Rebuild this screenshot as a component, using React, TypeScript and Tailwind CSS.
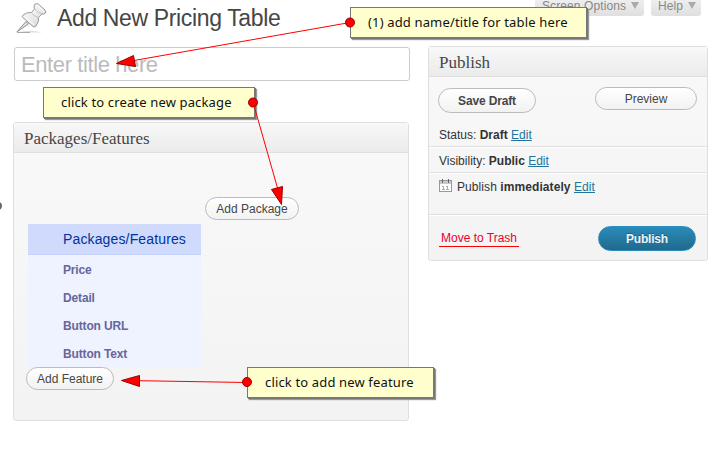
import type { ReactNode } from "react";

const pill =
  "box-border flex items-center justify-center rounded-full border border-[#bbb] bg-gradient-to-b from-white to-[#f2f2f2] text-[12px] leading-none text-[#464646] whitespace-nowrap";

function Panel({ title, className, children }: { title: string; className: string; children: ReactNode }) {
  return (
    <section className={`box-border flex flex-col rounded-[3px] border border-[#dfdfdf] bg-gradient-to-b from-[#f9f9f9] to-[#f3f3f3] ${className}`}>
      <h3 className="h-[30px] shrink-0 border-b border-[#dfdfdf] bg-gradient-to-b from-[#f8f8f8] to-[#ebebeb] pl-[10px] font-['Liberation_Serif',serif] text-[17px] leading-[31px] text-[#464646]">
        {title}
      </h3>
      {children}
    </section>
  );
}

function Callout({ className, children }: { className: string; children: ReactNode }) {
  return (
    <div className={`absolute box-border h-[31px] whitespace-nowrap border border-[#777] bg-[#ffffce] pl-[17px] font-['Noto_Sans',sans-serif] text-[13px] leading-[29px] tracking-[0.15px] text-[#111] shadow-[1px_1px_0_#777,2px_2px_1px_#999] ${className}`}>
      {children}
    </div>
  );
}

function Edit() {
  return <a className="text-[#21759b] underline">Edit</a>;
}

function Pin() {
  return (
    <svg className="block h-[32px] w-[32px]" viewBox="0 0 32 32">
      <defs>
        <linearGradient id="pin" x1="0" y1="0" x2="1" y2="1">
          <stop offset="0" stopColor="#ffffff" />
          <stop offset="0.5" stopColor="#ececec" />
          <stop offset="1" stopColor="#cfcfcf" />
        </linearGradient>
      </defs>
      <path d="M1 30.500Q14 27 26 30.500Z" fill="#ddd" />
      <path d="M1 30.500H14" stroke="#aaa" strokeWidth="1" />
      <path d="M10 19.500L1 29.800L12.500 22Z" fill="#ddd" stroke="#8a8a8a" strokeWidth="0.9" />
      <path d="M18.800 2.200Q20.500 0.900 22.500 2.200L29 8Q30.500 9.800 29.300 11.200Q28 12.500 26 12L22.500 15.500Q23.500 19.500 19.800 24.300Q18.500 25.500 17 24.500L6.800 15.500Q5.700 14.300 6.900 13.200Q10.500 10 15.500 10.500L18.500 7Q17.300 3.700 18.800 2.200Z" fill="url(#pin)" stroke="#909090" strokeWidth="0.9" />
      <path d="M18.500 6.800Q21.500 10.800 26 12M15.500 10.500Q17.500 14.500 22.500 15.500" fill="none" stroke="#bdbdbd" strokeWidth="0.8" />
      <path d="M19 8.500L16.800 11M20.500 3.500Q24.500 5 28 10M8 14.300L18 23" fill="none" stroke="#fff" strokeWidth="1" />
    </svg>
  );
}

function Calendar() {
  return (
    <svg className="mr-[5px] block h-[14px] w-[13px]" viewBox="0 0 13 14" shapeRendering="crispEdges">
      <path d="M0 1H13V13H0Z" fill="#999" />
      <path d="M1 2H12V5H1Z" fill="#c9c9c9" />
      <path d="M1 5H12V12H1Z" fill="#fff" />
      <path d="M3 0h1v4h-1ZM9 0h1v4h-1Z" fill="#666" />
      <path d="M3 7h2v3h1v1H3v-1h1V8H3ZM7 7h2v3h1v1H7v-1h1V8H7Z" fill="#aaa" />
    </svg>
  );
}

function Tab({ label, className }: { label: string; className: string }) {
  return (
    <div className={`flex h-[16px] items-start justify-between rounded-b-[3px] bg-gradient-to-b from-[#eee] to-[#dfdfdf] pl-[7px] pr-[5px] ${className}`}>
      <span className="-mt-[2px] whitespace-nowrap leading-[16px]">{label}</span>
      <span className="mt-[2px] border-x-[4px] border-t-[7px] border-x-transparent border-t-[#aaa]" />
    </div>
  );
}

export default function App() {
  return (
    <div className="relative h-[463px] w-[720px] overflow-hidden bg-white font-['Liberation_Sans',Arial,sans-serif] text-[12px] text-[#333]">
      <div className="flex gap-[18px] pl-[13px]">
        <main className="w-[397px] shrink-0">
          <header className="flex h-[47px] pl-[3px] pt-[2px]">
            <Pin />
            <h1 className="ml-[9px] whitespace-nowrap text-[23px] leading-[32px] tracking-[-0.36px] text-[#464646]">Add New Pricing Table</h1>
          </header>
          <div className="ml-[1px] box-border h-[34px] w-[396px] rounded-[3px] border border-[#ccc] bg-white pl-[6px] text-[22px] leading-[33px] tracking-[-0.4px] text-[#bbb]">
            Enter title here
          </div>
          <Panel title="Packages/Features" className="mt-[41px] h-[299px] w-[396px]">
            <button className={`${pill} ml-[191px] mt-[44px] h-[23px] w-[94px] shrink-0`}>Add Package</button>
            <div className="ml-[14px] mt-[4px] w-[173px] shrink-0">
              <div className="h-[31px] border-b border-[#c3d0fb] bg-[#d0dafd] pl-[35px] text-[14px] leading-[31px] tracking-[0.14px] text-[#003399]">Packages/Features</div>
              {["Price", "Detail", "Button URL", "Button Text"].map((name) => (
                <div key={name} className="h-[28px] bg-[#eff2ff] pl-[35px] font-bold leading-[30px] tracking-[-0.15px] text-[#666699]">{name}</div>
              ))}
            </div>
            <button className={`${pill} ml-[12px] h-[23px] w-[88px] shrink-0`}>Add Feature</button>
          </Panel>
        </main>

        <aside className="w-[280px] shrink-0">
          <nav className="ml-[107px] flex h-[46px] gap-[7px] text-[12px] tracking-[0.1px] text-[#888]">
            <Tab label="Screen Options" className="w-[109px]" />
            <Tab label="Help" className="w-[50px]" />
          </nav>
          <Panel title="Publish" className="h-[215px] w-[280px]">
            <div className="flex h-[46px] shrink-0 items-start justify-between pl-[9px] pr-[10px] pt-[10px]">
              <button className={`${pill} mt-[1px] h-[25px] w-[98px] font-bold tracking-[-0.15px]`}>Save Draft</button>
              <button className={`${pill} h-[23px] w-[102px]`}>Preview</button>
            </div>
            <div className="h-[24px] shrink-0 border-b border-[#dfdfdf] pl-[10px] leading-[24px]">Status: <b>Draft</b> <Edit /></div>
            <div className="h-[26px] shrink-0 border-b border-[#dfdfdf] border-t border-t-white pl-[10px] leading-[26px]">Visibility: <b>Public</b> <Edit /></div>
            <div className="flex h-[42px] shrink-0 items-start border-b border-[#dfdfdf] border-t border-t-white pl-[10px] pt-[5px]">
              <Calendar />
              <span className="leading-[17px] tracking-[0.08px]">Publish <b>immediately</b> <Edit /></span>
            </div>
            <div className="flex flex-1 items-start justify-between border-t border-white pl-[10px] pr-[11px] pt-[10px]">
              <span className="mt-[3px] box-border h-[18px] w-[80px] whitespace-nowrap border-b border-[#f00] pl-[2px] leading-[18px] text-[#f0002a]">Move to Trash</span>
              <button className="h-[25px] w-[98px] rounded-full border border-[#298cba] bg-gradient-to-b from-[#298cba] to-[#21698c] text-[12px] font-bold leading-[24px] tracking-[-0.2px] text-[#eaf2fa] [text-shadow:0_-1px_0_rgba(0,0,0,0.3)]">Publish</button>
            </div>
          </Panel>
        </aside>
      </div>

      <div className="absolute -left-[7px] top-[202px] h-[8px] w-[9px] rounded-full bg-[#666]" />
      <Callout className="left-[350px] top-[7px] w-[237px]">(1) add name/title for table here</Callout>
      <Callout className="left-[43px] top-[87px] w-[212px]">click to create new package</Callout>
      <Callout className="left-[247px] top-[367px] w-[187px]">click to add new feature</Callout>
      <svg className="pointer-events-none absolute left-0 top-0 h-[463px] w-[720px]" viewBox="0 0 720 463">
        <g stroke="#f00" strokeWidth="1">
          <path d="M350 22.5L134 60.5M253 102L277.500 188M247 382.500L139 380.700" />
        </g>
        <g fill="#f00" stroke="#900" strokeWidth="1">
          <path d="M116.500 63.500L133.500 55.500L135.500 66.500ZM281.500 204.500L271.500 189.500L282.500 186.500ZM121.500 380.500L139.500 375.500V386.500Z" />
          <circle cx="350" cy="22.500" r="4.500" />
          <circle cx="253" cy="102.500" r="4.500" />
          <circle cx="247" cy="382" r="4.500" />
        </g>
      </svg>
    </div>
  );
}
